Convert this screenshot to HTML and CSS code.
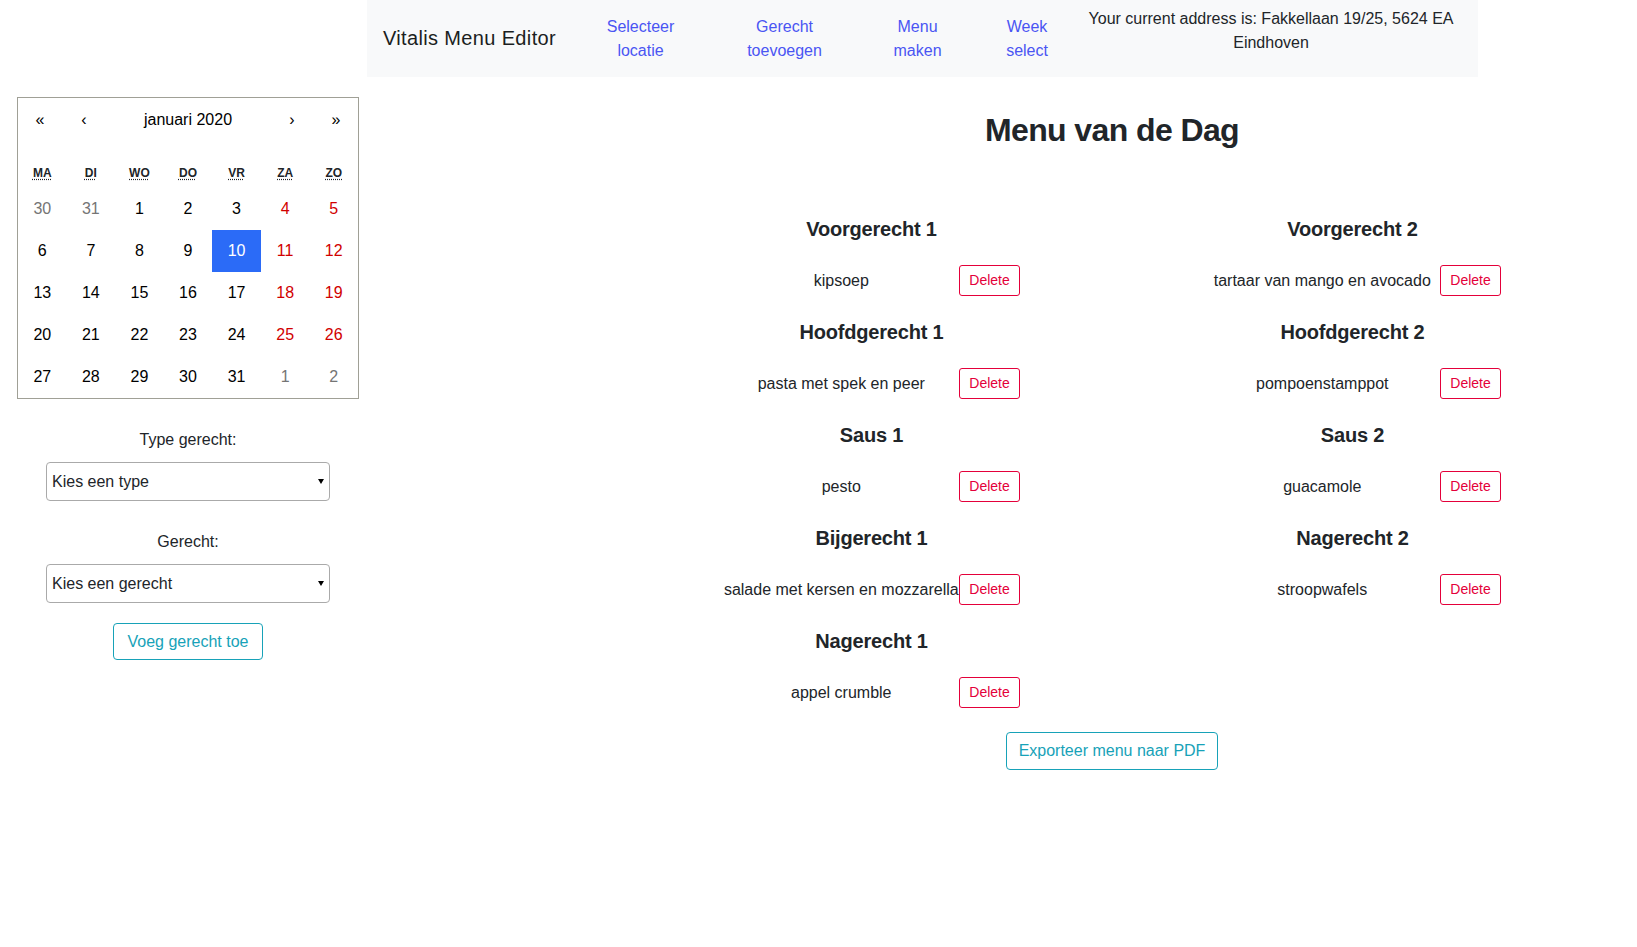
FILE: index.html
```html
<!DOCTYPE html>
<html lang="nl">
<head>
<meta charset="utf-8">
<title>Vitalis Menu Editor</title>
<link rel="stylesheet" href="styles.css">
</head>
<body>
<div class="page">
  <aside class="sidebar">
    <div class="calendar">
      <div class="cal-nav">
        <button class="cal-arrow">«</button>
        <button class="cal-arrow">‹</button>
        <button class="cal-label">januari 2020</button>
        <button class="cal-arrow">›</button>
        <button class="cal-arrow">»</button>
      </div>
      <div class="cal-weekdays">
        <div class="wd"><abbr title="maandag">ma</abbr></div>
        <div class="wd"><abbr title="dinsdag">di</abbr></div>
        <div class="wd"><abbr title="woensdag">wo</abbr></div>
        <div class="wd"><abbr title="donderdag">do</abbr></div>
        <div class="wd"><abbr title="vrijdag">vr</abbr></div>
        <div class="wd"><abbr title="zaterdag">za</abbr></div>
        <div class="wd"><abbr title="zondag">zo</abbr></div>
      </div>
      <div class="cal-days">
        <button class="tile neighbor">30</button>
        <button class="tile neighbor">31</button>
        <button class="tile">1</button>
        <button class="tile">2</button>
        <button class="tile">3</button>
        <button class="tile weekend">4</button>
        <button class="tile weekend">5</button>
        <button class="tile">6</button>
        <button class="tile">7</button>
        <button class="tile">8</button>
        <button class="tile">9</button>
        <button class="tile active">10</button>
        <button class="tile weekend">11</button>
        <button class="tile weekend">12</button>
        <button class="tile">13</button>
        <button class="tile">14</button>
        <button class="tile">15</button>
        <button class="tile">16</button>
        <button class="tile">17</button>
        <button class="tile weekend">18</button>
        <button class="tile weekend">19</button>
        <button class="tile">20</button>
        <button class="tile">21</button>
        <button class="tile">22</button>
        <button class="tile">23</button>
        <button class="tile">24</button>
        <button class="tile weekend">25</button>
        <button class="tile weekend">26</button>
        <button class="tile">27</button>
        <button class="tile">28</button>
        <button class="tile">29</button>
        <button class="tile">30</button>
        <button class="tile">31</button>
        <button class="tile neighbor">1</button>
        <button class="tile neighbor">2</button>
      </div>
    </div>

    <form class="dish-form">
      <label class="field-label first">Type gerecht:</label>
      <div class="select-wrap">
        <select class="select"><option>Kies een type</option></select>
      </div>
      <label class="field-label">Gerecht:</label>
      <div class="select-wrap">
        <select class="select"><option>Kies een gerecht</option></select>
      </div>
      <button type="button" class="btn btn-info btn-add">Voeg gerecht toe</button>
    </form>
  </aside>

  <main class="main">
    <nav class="navbar">
      <span class="brand">Vitalis Menu Editor</span>
      <ul class="nav">
        <li class="nav-item w1"><a class="nav-link">Selecteer locatie</a></li>
        <li class="nav-item w2"><a class="nav-link">Gerecht toevoegen</a></li>
        <li class="nav-item w3"><a class="nav-link">Menu maken</a></li>
        <li class="nav-item w4"><a class="nav-link">Week select</a></li>
      </ul>
      <p class="address">Your current address is: Fakkellaan 19/25, 5624 EA Eindhoven</p>
    </nav>

    <section class="menu">
      <h2 class="menu-title">Menu van de Dag</h2>
      <div class="columns">
        <div class="column">
          <div class="course">
            <h5 class="course-title">Voorgerecht 1</h5>
            <div class="course-item"><span class="dish">kipsoep</span><button class="btn-delete">Delete</button></div>
          </div>
          <div class="course">
            <h5 class="course-title">Hoofdgerecht 1</h5>
            <div class="course-item"><span class="dish">pasta met spek en peer</span><button class="btn-delete">Delete</button></div>
          </div>
          <div class="course">
            <h5 class="course-title">Saus 1</h5>
            <div class="course-item"><span class="dish">pesto</span><button class="btn-delete">Delete</button></div>
          </div>
          <div class="course">
            <h5 class="course-title">Bijgerecht 1</h5>
            <div class="course-item"><span class="dish">salade met kersen en mozzarella</span><button class="btn-delete">Delete</button></div>
          </div>
          <div class="course">
            <h5 class="course-title">Nagerecht 1</h5>
            <div class="course-item"><span class="dish">appel crumble</span><button class="btn-delete">Delete</button></div>
          </div>
        </div>
        <div class="column">
          <div class="course">
            <h5 class="course-title">Voorgerecht 2</h5>
            <div class="course-item"><span class="dish">tartaar van mango en avocado</span><button class="btn-delete">Delete</button></div>
          </div>
          <div class="course">
            <h5 class="course-title">Hoofdgerecht 2</h5>
            <div class="course-item"><span class="dish">pompoenstamppot</span><button class="btn-delete">Delete</button></div>
          </div>
          <div class="course">
            <h5 class="course-title">Saus 2</h5>
            <div class="course-item"><span class="dish">guacamole</span><button class="btn-delete">Delete</button></div>
          </div>
          <div class="course">
            <h5 class="course-title">Nagerecht 2</h5>
            <div class="course-item"><span class="dish">stroopwafels</span><button class="btn-delete">Delete</button></div>
          </div>
        </div>
      </div>
      <div class="export">
        <button class="btn btn-info btn-export">Exporteer menu naar PDF</button>
      </div>
    </section>
  </main>
</div>
</body>
</html>
```

FILE: styles.css
```css
* {
  box-sizing: border-box;
}

body {
  margin: 0;
  font-family: "Liberation Sans", Arial, sans-serif;
  font-size: 16px;
  line-height: 1.5;
  color: #212529;
  background: #fff;
}

button,
select {
  font-family: inherit;
}

.page {
  display: flex;
  align-items: flex-start;
}

/* ---------- Sidebar ---------- */
.sidebar {
  width: 367px;
  flex: none;
  padding: 97px 8px 0 17px;
  display: flex;
  flex-direction: column;
  align-items: center;
}

.calendar {
  width: 342px;
  border: 1px solid #a0a096;
  background: #fff;
  font-family: "Liberation Sans", Arial, sans-serif;
  line-height: 1.125em;
  color: #000;
}

.cal-nav {
  display: flex;
  height: 44px;
  margin-bottom: 16px;
}

.cal-nav button {
  background: none;
  border: 0;
  font-size: 16px;
  color: #000;
  padding: 0;
  margin: 0;
}

.cal-arrow {
  min-width: 44px;
}

.cal-label {
  flex: 1;
}

.cal-weekdays {
  display: grid;
  grid-template-columns: repeat(7, 1fr);
  height: 30px;
  align-items: center;
}

.wd {
  text-align: center;
  font-size: 12px;
  font-weight: bold;
  text-transform: uppercase;
  color: #212529;
}

.wd abbr {
  text-decoration: underline dotted;
  text-underline-offset: 2px;
}

.cal-days {
  display: grid;
  grid-template-columns: repeat(7, 1fr);
}

.tile {
  height: 42px;
  border: 0;
  background: none;
  padding: 12px 8px;
  font-size: 16px;
  line-height: 18px;
  color: #000;
  text-align: center;
}

.tile.weekend {
  color: #d10000;
}

.tile.neighbor {
  color: #757575;
}

.tile.active {
  background: #2b6bf7;
  color: #fff;
}

.dish-form {
  display: flex;
  flex-direction: column;
  align-items: center;
  width: 100%;
}

.field-label {
  display: block;
  margin-top: 29px;
  line-height: 24px;
}

.field-label.first {
  margin-top: 29px;
}

.select-wrap {
  position: relative;
  width: 284px;
  margin-top: 10px;
}

.select-wrap::after {
  content: "";
  position: absolute;
  right: 6px;
  top: 17px;
  border-left: 3px solid transparent;
  border-right: 3px solid transparent;
  border-top: 5px solid #000;
  pointer-events: none;
}

.select {
  appearance: none;
  -webkit-appearance: none;
  display: block;
  width: 100%;
  height: 39px;
  padding: 0 20px 0 5px;
  font-size: 16px;
  color: #212529;
  background: #fff;
  border: 1px solid #aaa;
  border-radius: 4px;
}

.btn {
  display: inline-block;
  font-size: 16px;
  line-height: 24px;
  border-radius: 4px;
  background: #fff;
  cursor: pointer;
}

.btn-info {
  color: #17a2b8;
  border: 1px solid #17a2b8;
}

.btn-add {
  margin-top: 20px;
  padding: 5.5px 14px;
}

/* ---------- Main ---------- */
.main {
  flex: 1;
  min-width: 0;
}

.navbar {
  width: 1111px;
  height: 77px;
  background: #f8f9fa;
  display: flex;
  align-items: center;
  padding: 0 16px;
}

.brand {
  font-size: 20px;
  line-height: 30px;
  padding: 4px 0 6px;
  margin-right: 16px;
  letter-spacing: 0.35px;
  color: #1b1e21;
  white-space: nowrap;
}

.nav {
  display: flex;
  list-style: none;
  margin: 0 0 0 1px;
  padding: 0;
}

.nav-item {
  text-align: center;
}

.nav-item.w1 { width: 135px; }
.nav-item.w2 { width: 153px; }
.nav-item.w3 { width: 113px; }
.nav-item.w4 { width: 106px; }

.nav-link {
  display: block;
  width: min-content;
  margin: 0 auto;
  color: #4a55f3;
  line-height: 24px;
  cursor: pointer;
}

.address {
  flex: 1;
  margin: 0 0 16px;
  text-align: center;
  line-height: 24px;
}

.menu {
  width: 962px;
  margin-left: 264px;
}

.menu-title {
  margin: 34px 0 0;
  font-size: 32px;
  line-height: 1.2;
  font-weight: bold;
  letter-spacing: -0.6px;
  text-align: center;
  color: #212529;
}

.columns {
  display: grid;
  grid-template-columns: 1fr 1fr;
  margin-top: 68px;
}

.course {
  display: flex;
  flex-direction: column;
  align-items: center;
}

.course-title {
  margin: 0 0 24px;
  font-size: 20px;
  line-height: 24px;
  font-weight: bold;
  letter-spacing: -0.2px;
  color: #212529;
}

.course-item {
  display: flex;
  align-items: center;
  margin-bottom: 24px;
}

.dish {
  width: 236px;
  text-align: center;
  white-space: nowrap;
  line-height: 24px;
}

.btn-delete {
  height: 31px;
  padding: 0 9px;
  font-size: 14px;
  line-height: 21px;
  color: #e4003a;
  background: #fff;
  border: 1px solid #e4003a;
  border-radius: 3px;
}

.export {
  text-align: center;
}

.btn-export {
  padding: 6px 12px;
}
```
